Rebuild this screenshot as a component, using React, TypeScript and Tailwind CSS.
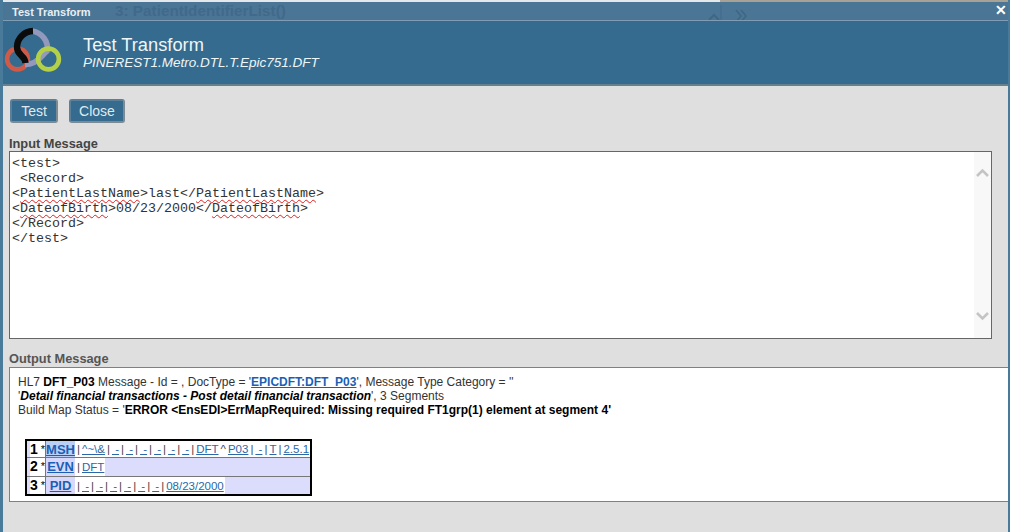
const sans = "font-['Liberation_Sans',Arial,sans-serif]";

function Logo() {
  return (
    <svg width="62" height="50" viewBox="0 0 62 50" className="block">
      <circle cx="13.5" cy="33" r="10.4" fill="none" stroke="#d05a48" strokeWidth="4.6" />
      <path d="M28 5 A18 17 0 0 1 43 25 C38 29 37 33 30 36.5 C27 38 25 38.5 21 38.5" fill="none" stroke="#9398bd" strokeWidth="5.6" />
      <circle cx="44.5" cy="33" r="10.4" fill="none" stroke="#b4d048" strokeWidth="4.6" />
      <path d="M29 5 A16.5 16.5 0 0 0 13 21 C13 30 21 29 21.5 37" fill="none" stroke="#0b0b0b" strokeWidth="6.4" />
    </svg>
  );
}

function Wavy({ children }: { children: string }) {
  return <span className="underline decoration-wavy decoration-[#e02020] decoration-1 underline-offset-2">{children}</span>;
}

function Chevron({ down }: { down?: boolean }) {
  return (
    <svg width="13" height="10" viewBox="0 0 13 10" className="block">
      <path d={down ? "M1 2 L6.5 7.5 L12 2" : "M1 8 L6.5 2.5 L12 8"} fill="none" stroke="#c4c4c4" strokeWidth="2.6" />
    </svg>
  );
}

function Fields({ items }: { items: string[] }) {
  return (
    <>
      {items.map((t, i) => {
        const caret = t.startsWith("^") && t !== "^~\\&";
        const label = caret ? t.slice(1) : t;
        return (
          <span key={i} className="flex">
            <span className="px-[2px]">{caret ? "^" : "|"}</span>
            <a className="text-[#2a68a8] underline">{label === "-" ? "\u00a0-" : label}</a>
          </span>
        );
      })}
    </>
  );
}

function Row({ n, seg, h, segBg, items, last }: { n: string; seg: string; h: string; segBg: string; items: React.ReactNode; last?: boolean }) {
  return (
    <div className={`flex ${h} ${last ? "" : "border-b border-[#777]"}`}>
      <div className="w-[3px] shrink-0 bg-[#dcdcfc]" />
      <div className="w-[16px] shrink-0 bg-white border-r border-[#777] flex items-start text-[14px] font-bold text-black leading-[17px]">
        {n}
        <span className="font-normal text-[11px] ml-[3px]">*</span>
      </div>
      <div className={`w-[29px] shrink-0 ${segBg} flex justify-center text-[13px] leading-[17px] font-bold text-[#1a5fb4] underline`}>{seg}</div>
      <div className="bg-white flex items-center text-[11.5px] text-[#444] pr-[1px] h-full whitespace-pre">{items}</div>
    </div>
  );
}

export default function App() {
  return (
    <div className={`${sans} w-[1010px] h-[532px] overflow-hidden flex flex-col bg-[#dfdfdf] pl-[3px] pr-[2px] relative`}>
      <div className="absolute left-0 top-0 bottom-0 w-[3px] bg-[#4a7a9a]" />
      <div className="absolute right-0 top-0 bottom-0 w-[2px] bg-[#4a7a9a]" />
      <div className="h-[2px] shrink-0 -mx-[3px] flex">
        <div className="w-[720px] bg-[#e4e8ea]" />
        <div className="flex-1 bg-[#a8a294]" />
      </div>
      <div className="h-[19px] shrink-0 bg-[#4a7595] border-b border-[#7f9cb2] flex items-center justify-between pl-[9px] pr-[1px] pt-[2px] relative overflow-hidden">
        <span className="text-[11px] font-bold text-[#e8eff4] leading-none">Test Transform</span>
        <span className="absolute left-[112px] top-[1px] text-[15.3px] font-bold text-[#41698a] whitespace-pre leading-none">3: PatientIdentifierList()</span>
        <svg width="40" height="16" viewBox="0 0 40 16" className="absolute left-[704px] top-[3px]">
          <path d="M2 15 L7 10 L12 15" fill="none" stroke="#3f6785" strokeWidth="2" />
          <path d="M14 0 V16" stroke="#41698a" strokeWidth="1" />
          <path d="M29 5 L34 11 L29 17 M34 5 L39 11 L34 17" fill="none" stroke="#3f6785" strokeWidth="1.6" />
        </svg>
        <span className="text-[14px] font-bold text-white leading-none -mt-[4px]">✕</span>
      </div>
      <div className="h-[65px] shrink-0 bg-[#356b8e] border-b-2 border-[#66808f] flex items-start">
        <div className="ml-[1px] mt-[5px] w-[79px]">
          <Logo />
        </div>
        <div className="pt-[13px]">
          <div className="text-[18.3px] text-[#eef6f8] leading-[21px]">Test Transform</div>
          <div className="text-[13.5px] italic text-[#eef6f8] leading-[16px]">PINEREST1.Metro.DTL.T.Epic751.DFT</div>
        </div>
      </div>
      <div className="flex gap-[11px] pl-[7px] pt-[13px] shrink-0">
        <button className="w-[48px] h-[24px] bg-[#356b8e] border-2 border-[#7c8a94] border-t-[#5b7f98] border-l-[#5b7f98] rounded-[3px] text-[14px] text-[#dfeaf0] leading-none">Test</button>
        <button className="w-[56px] h-[24px] bg-[#356b8e] border-2 border-[#7c8a94] border-t-[#5b7f98] border-l-[#5b7f98] rounded-[3px] text-[14px] text-[#dfeaf0] leading-none">Close</button>
      </div>
      <div className="pl-[6px] pt-[13px] text-[12.8px] font-bold text-[#444] leading-[15px] shrink-0">Input Message</div>
      <div className="ml-[6px] w-[983px] h-[188px] shrink-0 border border-[#666] bg-white flex">
        <div className="flex-1 pl-[2px] pt-[4px] font-['Liberation_Mono',monospace] text-[13.33px] leading-[15px] text-[#333] whitespace-pre">
          <div>&lt;test&gt;</div>
          <div> &lt;Record&gt;</div>
          <div>&lt;<Wavy>PatientLastName</Wavy>&gt;last&lt;/<Wavy>PatientLastName</Wavy>&gt;</div>
          <div>&lt;<Wavy>DateofBirth</Wavy>&gt;08/23/2000&lt;/<Wavy>DateofBirth</Wavy>&gt;</div>
          <div>&lt;/Record&gt;</div>
          <div>&lt;/test&gt;</div>
        </div>
        <div className="w-[17px] bg-[#f8f8f8] flex flex-col items-center justify-between pt-[16px] pb-[17px]">
          <Chevron />
          <Chevron down />
        </div>
      </div>
      <div className="pl-[6px] pt-[13px] pb-[1px] text-[12.8px] font-bold text-[#555] leading-[14px] shrink-0">Output Message</div>
      <div className="ml-[6px] h-[135px] shrink-0 border-y border-[#808080] border-l bg-white pl-[8px] pt-[7px] text-[12px] leading-[14px] text-[#333]">
        <div>
          HL7 <b className="text-black">DFT_P03</b> Message - Id = , DocType = '<a className="text-[#1a5fb4] underline font-bold">EPICDFT:DFT_P03</a>', Message Type Category = ''
        </div>
        <div>
          '<b className="italic text-black">Detail financial transactions - Post detail financial transaction</b>', 3 Segments
        </div>
        <div>
          Build Map Status = '<b className="text-black">ERROR &lt;EnsEDI&gt;ErrMapRequired: Missing required FT1grp(1) element at segment 4'</b>
        </div>
        <div className="ml-[7px] mt-[22px] w-[287px] h-[57px] border-2 border-black bg-[#dcdcfc]">
          <Row n="1" seg="MSH" h="h-[17px]" segBg="bg-[#b9cff5]" items={<Fields items={["^~\\&", "-", "-", "-", "-", "-", "-", "DFT", "^P03", "-", "T", "2.5.1"]} />} />
          <Row n="2" seg="EVN" h="h-[19px]" segBg="bg-[#d8d8fc]" items={<Fields items={["DFT"]} />} />
          <Row n="3" seg="PID" h="h-[17px]" segBg="bg-[#d8d8fc]" items={<Fields items={["-", "-", "-", "-", "-", "-", "08/23/2000"]} />} last />
        </div>
      </div>
    </div>
  );
}
